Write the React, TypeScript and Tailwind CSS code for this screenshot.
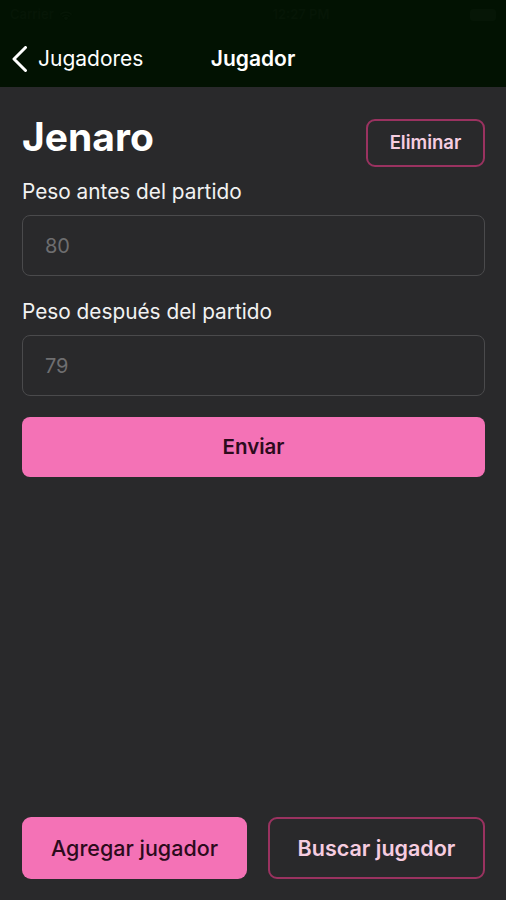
const font = { fontFamily: "Inter, 'Noto Sans', sans-serif" };

function StatusBar() {
    return (
        <div className="h-[30px] flex items-center justify-between px-[10px] text-[13px] font-semibold text-[#061606]">
            <div className="flex items-center gap-1">
                <span>Carrier</span>
                <svg width="16" height="12" viewBox="0 0 16 12" fill="#061606">
                    <path d="M8 11.5 5.6 9a3.4 3.4 0 0 1 4.8 0L8 11.5Z" />
                    <path d="M3.8 7.2a6 6 0 0 1 8.4 0l-1.1 1.1a4.5 4.5 0 0 0-6.2 0L3.8 7.2Z" />
                    <path d="M1.6 5a9 9 0 0 1 12.8 0l-1.1 1.1a7.5 7.5 0 0 0-10.6 0L1.6 5Z" />
                </svg>
            </div>
            <span className="ml-[58px]">12:27 PM</span>
            <div className="w-[26px] h-[12px] rounded-[3px] bg-[#061606]" />
        </div>
    );
}

function Field({ label, value }: { label: string; value: string }) {
    return (
        <div className="flex flex-col">
            <label className="text-[20.8px] text-[#f2f2f2] leading-[24px] mb-[11px]">{label}</label>
            <div className="h-[61px] rounded-[8px] border border-[#4a4a4c] flex items-center px-[22px] text-[20px] text-[#6e6e70]">
                {value}
            </div>
        </div>
    );
}

export default function App() {
    return (
        <div className="w-[506px] h-[900px] flex flex-col bg-[#29292b] overflow-hidden" style={font}>
            <div className="bg-[#021202]">
                <StatusBar />
                <div className="relative h-[57px] flex items-center">
                    <div className="flex items-center pl-[12px] text-white text-[21px]">
                        <svg width="16" height="26" viewBox="0 0 16 26" fill="none" stroke="white" strokeWidth="3" strokeLinecap="round" strokeLinejoin="round" className="mr-[10px]">
                            <path d="M13.5 1.5 2 13l11.5 11.5" />
                        </svg>
                        <span>Jugadores</span>
                    </div>
                    <span className="absolute left-1/2 -translate-x-1/2 text-white text-[21px] font-semibold">
                        Jugador
                    </span>
                </div>
            </div>

            <div className="flex-1 flex flex-col pl-[22px] pr-[21px]">
                <div className="flex items-start justify-between pt-[28px]">
                    <h1 className="text-[39px] font-bold text-white leading-[44px]">Jenaro</h1>
                    <button className="mt-[4px] w-[119px] h-[48px] rounded-[9px] border-2 border-[#9a3260] text-[#f6cde0] text-[18.5px] font-semibold">
                        Eliminar
                    </button>
                </div>

                <div className="mt-[13px] flex flex-col gap-[24px]">
                    <Field label="Peso antes del partido" value="80" />
                    <Field label="Peso después del partido" value="79" />
                </div>

                <button className="mt-[21px] h-[60px] rounded-[8px] bg-[#f472b6] text-[#2c0b1c] text-[20.5px] font-semibold">
                    Enviar
                </button>

                <div className="mt-auto mb-[21px] flex gap-[21px]">
                    <button className="w-[225px] h-[62px] rounded-[9px] bg-[#f472b6] text-[#2c0b1c] text-[21.5px] font-medium">
                        Agregar jugador
                    </button>
                    <button className="flex-1 h-[62px] rounded-[9px] border-2 border-[#9a3260] text-[#f6cde0] text-[21.5px] font-semibold">
                        Buscar jugador
                    </button>
                </div>
            </div>
        </div>
    );
}
